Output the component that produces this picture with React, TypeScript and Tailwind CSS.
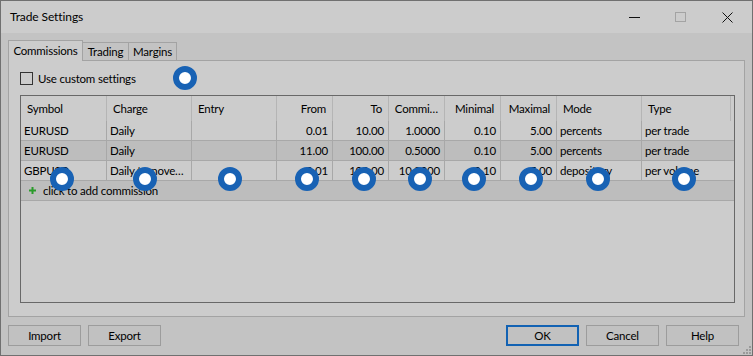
import React from "react";

const cols = "grid grid-cols-[86px_85px_85px_56px_56px_56px_56px_56px_85px_89px]";

const rows = [
  ["EURUSD", "Daily", "", "0.01", "10.00", "1.0000", "0.10", "5.00", "percents", "per trade"],
  ["EURUSD", "Daily", "", "11.00", "100.00", "0.5000", "0.10", "5.00", "percents", "per trade"],
  ["GBPUSD", "Daily turnove…", "", "0.01", "100.00", "10.0000", "0.10", "5.00", "depository", "per volume"],
];

const headers = [
  { t: "Symbol", r: false },
  { t: "Charge", r: false },
  { t: "Entry", r: false },
  { t: "From", r: true },
  { t: "To", r: true },
  { t: "Commi…", r: true },
  { t: "Minimal", r: true },
  { t: "Maximal", r: true },
  { t: "Mode", r: false },
  { t: "Type", r: false },
];

const markers = [
  [185, 78],
  [62, 179],
  [145, 179],
  [230, 179],
  [307, 179],
  [364, 179],
  [420, 179],
  [474, 179],
  [531, 179],
  [598, 179],
  [684, 179],
];

function Btn({ label, primary }: { label: string; primary?: boolean }) {
  return (
    <button
      className={
        "w-[73px] h-[21px] flex items-center justify-center bg-[#c1c1c1] text-black " +
        (primary ? "border-2 border-[#1262b3]" : "border border-[#9c9c9c]")
      }
    >
      {label}
    </button>
  );
}

export default function App() {
  return (
    <div className="relative w-[753px] h-[356px] flex flex-col bg-[#c3c3c3] border border-[#707070] text-[11.5px] tracking-[-0.2px] text-black font-['Lato',sans-serif] leading-none">
      {/* Title bar */}
      <div className="h-[32px] shrink-0 bg-[#cccccc] flex items-center pl-[9px]">
        <span className="flex-1 text-[12px] tracking-[-0.1px]">Trade Settings</span>
        <svg width="11" height="11" className="mr-[35px]">
          <line x1="0" y1="5.5" x2="11" y2="5.5" stroke="#111" />
        </svg>
        <svg width="11" height="11" className="mr-[36px]">
          <rect x="0.5" y="0.5" width="10" height="9" fill="none" stroke="#a3a3a3" />
        </svg>
        <svg width="11" height="11" className="mr-[19px]">
          <path d="M0.5 0.5 L10.5 10.5 M10.5 0.5 L0.5 10.5" stroke="#111" />
        </svg>
      </div>

      {/* Body */}
      <div className="flex-1 flex flex-col px-[7px] pt-[7px]">
        {/* Tabs */}
        <div className="flex items-end h-[20px] relative z-10">
          <div className="w-[75px] h-[21px] -mb-[1px] flex items-center justify-center bg-[#cccccc] border border-b-0 border-[#a3a3a3]">
            Commissions
          </div>
          <div className="w-[46px] h-[18px] flex items-center justify-center bg-[#c3c3c3] border border-l-0 border-b-0 border-[#a3a3a3]">
            Trading
          </div>
          <div className="w-[48px] h-[18px] flex items-center justify-center bg-[#c3c3c3] border border-l-0 border-b-0 border-[#a3a3a3]">
            Margins
          </div>
        </div>

        {/* Panel */}
        <div className="h-[257px] bg-[#cccccc] border border-[#a3a3a3] flex flex-col pl-[11px] pr-[9px] pt-[11px]">
          <label className="flex items-center gap-[5px] h-[13px]">
            <span className="w-[13px] h-[13px] border border-[#333333]" />
            <span>Use custom settings</span>
          </label>

          {/* Table */}
          <div className="mt-[10px] h-[208px] border border-[#686868] flex flex-col">
            <div className={cols + " h-[25px]"}>
              {headers.map((h, i) => (
                <div
                  key={i}
                  className={
                    "flex items-center border-r border-[#b5b5b5] " +
                    (h.r ? "justify-end pr-[6px]" : "pl-[6px]")
                  }
                >
                  {h.t}
                </div>
              ))}
            </div>
            {rows.map((r, ri) => (
              <div
                key={ri}
                className={
                  cols +
                  " h-[20px] border-b border-[#a8a8a8] " +
                  (ri === 1 ? "bg-[#bdbdbd]" : "")
                }
              >
                {r.map((c, ci) => (
                  <div
                    key={ci}
                    className={
                      "flex items-center whitespace-nowrap overflow-hidden " +
                      (ci < 9 ? "border-r border-[#a8a8a8] " : "") +
                      (ci >= 3 && ci <= 7 ? "justify-end pr-[4px]" : "pl-[3px]")
                    }
                  >
                    {c}
                  </div>
                ))}
              </div>
            ))}
            <div className="h-[20px] border-b border-[#a8a8a8] bg-[#bdbdbd] flex items-center pl-[8px] gap-[7px]">
              <svg width="7" height="7">
                <path d="M3.5 0 V7 M0 3.5 H7" stroke="#2a9b2a" strokeWidth="2" />
              </svg>
              <span>click to add commission</span>
            </div>
          </div>
        </div>

        {/* Buttons */}
        <div className="flex items-center mt-[8px]">
          <div className="flex gap-[7px]">
            <Btn label="Import" />
            <Btn label="Export" />
          </div>
          <div className="flex-1" />
          <div className="flex gap-[7px] mr-[6px]">
            <Btn label="OK" primary />
            <Btn label="Cancel" />
            <Btn label="Help" />
          </div>
        </div>
      </div>

      {/* Resize grip */}
      <svg width="9" height="9" className="absolute right-[1px] bottom-[1px]">
        {[
          [7, 1],
          [4, 4],
          [7, 4],
          [1, 7],
          [4, 7],
          [7, 7],
        ].map(([x, y], i) => (
          <rect key={i} x={x} y={y} width="2" height="2" fill="#9a9a9a" />
        ))}
      </svg>

      {/* Markers */}
      {markers.map(([x, y], i) => (
        <div
          key={i}
          className="absolute w-[24px] h-[24px] rounded-full border-[6px] border-[#1862b4] bg-white"
          style={{ left: x - 13, top: y - 13 }}
        />
      ))}
    </div>
  );
}
